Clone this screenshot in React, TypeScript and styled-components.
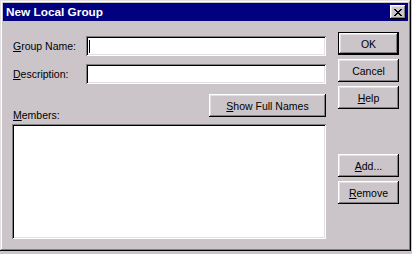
import * as React from 'react';
import styled, { createGlobalStyle, css } from 'styled-components';

const face = '#cbc5c9';
const light = '#e4e0e2';
const shadow = '#808080';

const GlobalStyle = createGlobalStyle`
  html, body {
    margin: 0;
    padding: 0;
    background: ${face};
  }
  body {
    font-family: "Liberation Sans", Arial, sans-serif;
    font-size: 10.5px;
    color: #000;
  }
`;

const raised = css`
  box-shadow:
    inset -1px -1px #000,
    inset 1px 1px #fff,
    inset -2px -2px ${shadow},
    inset 2px 2px ${light};
`;

const sunken = css`
  box-shadow:
    inset 1px 1px ${shadow},
    inset -1px -1px #fff,
    inset 2px 2px #000,
    inset -2px -2px ${light};
`;

const Window = styled.div`
  width: 411px;
  height: 251px;
  box-sizing: border-box;
  padding: 3px;
  display: flex;
  flex-direction: column;
  background: ${face};
  box-shadow:
    inset -1px -1px #000,
    inset 1px 1px ${light},
    inset -2px -2px ${shadow},
    inset 2px 2px #fff;
`;

const TitleBar = styled.div`
  height: 18px;
  flex: none;
  display: flex;
  align-items: center;
  justify-content: space-between;
  padding: 0 2px 0 3px;
  background: #000080;
  color: #fff;
  font-weight: bold;
  font-size: 11.8px;
`;

const CloseBox = styled.div`
  width: 16px;
  height: 14px;
  display: flex;
  align-items: center;
  justify-content: center;
  background: ${face};
  ${raised};
`;

const Body = styled.div`
  flex: 1;
  display: flex;
  gap: 12px;
  padding-left: 9px;
`;

const LeftColumn = styled.div`
  width: 314px;
  display: flex;
  flex-direction: column;
`;

const FieldRow = styled.div<{ $top: number }>`
  display: flex;
  align-items: center;
  height: 20px;
  margin-top: ${p => p.$top}px;
`;

const Label = styled.div`
  width: 74px;
  padding-left: 1px;
  box-sizing: border-box;
  white-space: nowrap;
`;

const Field = styled.div`
  flex: 1;
  height: 20px;
  background: #fff;
  display: flex;
  align-items: center;
  padding-left: 3px;
  ${sunken};
`;

const Caret = styled.span`
  width: 1px;
  height: 13px;
  background: #000;
`;

const MembersRow = styled.div`
  display: flex;
  justify-content: space-between;
  align-items: flex-end;
  margin-top: 10px;
`;

const MembersLabel = styled.div`
  line-height: 13px;
  padding-left: 1px;
  margin-bottom: -1px;
`;

const ListBox = styled.div`
  margin-top: 3px;
  height: 115px;
  background: #fff;
  ${sunken};
`;

const RightColumn = styled.div`
  width: 61px;
  display: flex;
  flex-direction: column;
`;

const Button = styled.div<{ $top?: number; $width?: number; $default?: boolean }>`
  width: ${p => p.$width ?? 61}px;
  height: 23px;
  box-sizing: border-box;
  margin-top: ${p => p.$top ?? 4}px;
  display: flex;
  align-items: center;
  justify-content: center;
  background: ${face};
  white-space: nowrap;
  ${p => p.$default
    ? css`
      box-shadow:
        inset 0 0 0 1px #000,
        inset -2px -2px #000,
        inset 2px 2px #fff,
        inset -3px -3px ${shadow},
        inset 3px 3px ${light};
    `
    : raised};
`;

const ShowNames = styled(Button)`
  margin-bottom: 4px;
`;

const Key = styled.span`
  text-decoration: underline;
  text-underline-offset: 1px;
`;

const CloseGlyph = () => {
  const cells = [
    '11000011',
    '01100110',
    '00111100',
    '00011000',
    '00111100',
    '01100110',
    '11000011',
  ];
  return (
    <svg width="8" height="7" viewBox="0 0 8 7" shapeRendering="crispEdges">
      {cells.map((row, y) =>
        row.split('').map((c, x) =>
          c === '1' ? <rect key={`${x}-${y}`} x={x} y={y} width="1" height="1" fill="#000" /> : null,
        ),
      )}
    </svg>
  );
};

export default function App() {
  return (
    <>
      <GlobalStyle />
      <Window>
        <TitleBar>
          <span>New Local Group</span>
          <CloseBox>
            <CloseGlyph />
          </CloseBox>
        </TitleBar>
        <Body>
          <LeftColumn>
            <FieldRow $top={15}>
              <Label><Key>G</Key>roup Name:</Label>
              <Field><Caret /></Field>
            </FieldRow>
            <FieldRow $top={8}>
              <Label><Key>D</Key>escription:</Label>
              <Field />
            </FieldRow>
            <MembersRow>
              <MembersLabel><Key>M</Key>embers:</MembersLabel>
              <ShowNames $top={0} $width={117}><span><Key>S</Key>how Full Names</span></ShowNames>
            </MembersRow>
            <ListBox />
          </LeftColumn>
          <RightColumn>
            <Button $top={11} $default>OK</Button>
            <Button>Cancel</Button>
            <Button><span><Key>H</Key>elp</span></Button>
            <Button $top={45}><span><Key>A</Key>dd...</span></Button>
            <Button><span><Key>R</Key>emove</span></Button>
          </RightColumn>
        </Body>
      </Window>
    </>
  );
}
